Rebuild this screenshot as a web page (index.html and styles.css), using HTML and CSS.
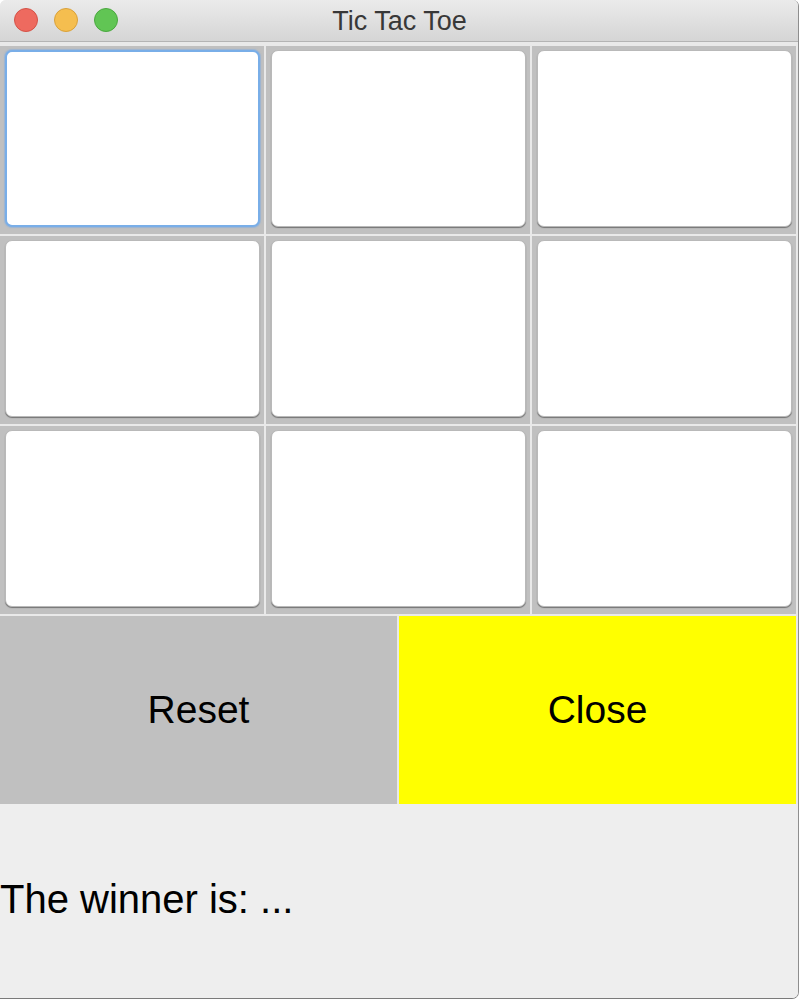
FILE: index.html
```html
<!DOCTYPE html>
<html>
<head>
<meta charset="utf-8">
<title>Tic Tac Toe</title>
<link rel="stylesheet" href="styles.css">
</head>
<body>
<div class="window">
  <div class="titlebar">
    <div class="lights">
      <span class="light red"></span>
      <span class="light yellow"></span>
      <span class="light green"></span>
    </div>
    <div class="title">Tic Tac Toe</div>
  </div>
  <div class="content">
    <div class="board">
      <div class="cell"><button class="square focused"></button></div>
      <div class="cell"><button class="square"></button></div>
      <div class="cell"><button class="square"></button></div>
      <div class="cell"><button class="square"></button></div>
      <div class="cell"><button class="square"></button></div>
      <div class="cell"><button class="square"></button></div>
      <div class="cell"><button class="square"></button></div>
      <div class="cell"><button class="square"></button></div>
      <div class="cell"><button class="square"></button></div>
    </div>
    <div class="actions">
      <button class="action reset">Reset</button>
      <button class="action close">Close</button>
    </div>
    <div class="status">The winner is: ...</div>
  </div>
</div>
</body>
</html>
```

FILE: styles.css
```css
html, body {
  margin: 0;
  padding: 0;
  background: #ffffff;
}

.window {
  width: 798px;
  height: 998px;
  display: flex;
  flex-direction: column;
  border-right: 1px solid #8e8e8e;
  border-bottom: 1px solid #7a7a7a;
  border-radius: 6px 6px 7px 0;
  overflow: hidden;
  background: #ececec;
  font-family: "Liberation Sans", Arial, sans-serif;
}

.titlebar {
  height: 41px;
  flex: none;
  position: relative;
  display: flex;
  align-items: center;
  justify-content: center;
  background: linear-gradient(#ebebeb, #d5d5d5);
  border-bottom: 1px solid #b4b4b4;
}

.lights {
  position: absolute;
  left: 14px;
  top: 8px;
  display: flex;
  gap: 16px;
}

.light {
  width: 22px;
  height: 22px;
  border-radius: 50%;
  display: block;
}

.red { background: #ee6a5f; border: 1px solid #d45247; }
.yellow { background: #f5be4f; border: 1px solid #d9a13a; }
.green { background: #61c554; border: 1px solid #4aa83f; }

.title {
  font-size: 27px;
  color: #383838;
  margin-top: 1px;
  padding-left: 1px;
}

.content {
  flex: 1;
  display: flex;
  flex-direction: column;
  padding: 4px 2px 0 0;
  gap: 2px;
  background: #e9e9e9;
}

.board {
  display: grid;
  grid-template-columns: repeat(3, 1fr);
  grid-template-rows: repeat(3, 188px);
  gap: 2px;
}

.cell {
  background: #c0c0c0;
  padding: 4px 4px 7px 5px;
  display: flex;
}

.square {
  flex: 1;
  margin: 0;
  padding: 0;
  background: #ffffff;
  border: 1px solid #b9b9b9;
  border-radius: 7px;
  box-shadow: 0 1px 1px rgba(0, 0, 0, 0.4);
}

.square.focused {
  border: 2px solid #79aee8;
  box-shadow: 0 0 1px 1px rgba(120, 170, 230, 0.5);
}

.actions {
  display: grid;
  grid-template-columns: 1fr 1fr;
  gap: 2px;
  height: 188px;
  flex: none;
}

.action {
  margin: 0;
  border: none;
  font-family: "Liberation Sans", Arial, sans-serif;
  font-size: 39px;
  color: #000000;
  padding: 0;
}

.reset { background: #c0c0c0; }
.close { background: #ffff00; }

.status {
  flex: 1;
  margin-top: -2px;
  margin-right: -2px;
  background: #eeeeee;
  display: flex;
  align-items: center;
  font-size: 40px;
  color: #000000;
  padding-bottom: 4px;
}
```
